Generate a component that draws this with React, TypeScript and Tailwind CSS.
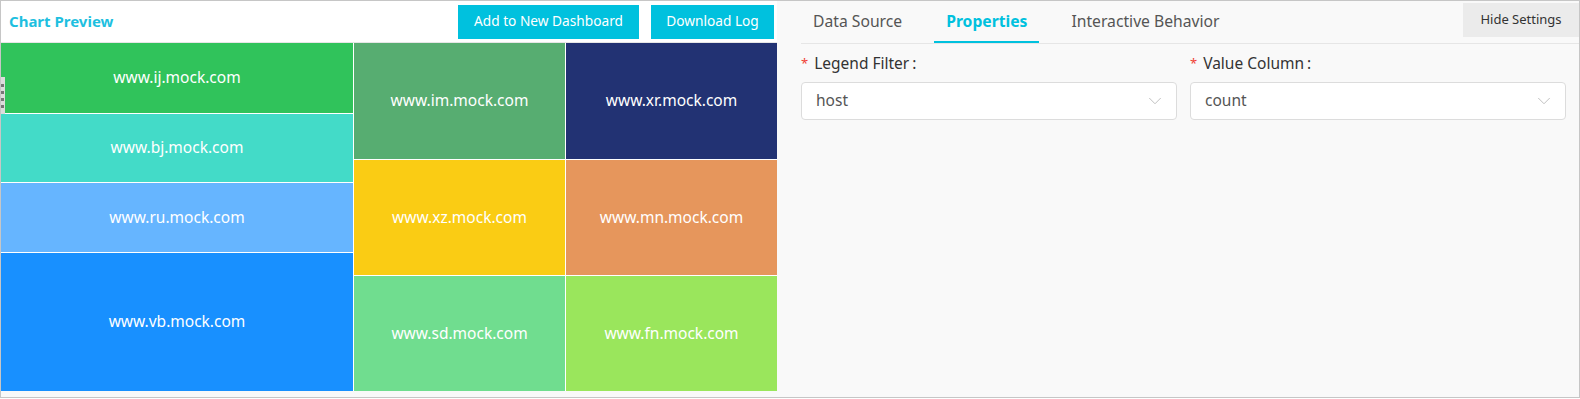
import { ChevronDown } from 'lucide-react'

type Cell = {
  host: string,
  color: string,
  height: string,
}

const font = { fontFamily: '"Noto Sans", "Open Sans", "Noto Sans CJK SC", sans-serif' }

const columns: Array<{ width: string, cells: Array<Cell> }> = [{
  width: 'w-[352px]',
  cells: [
    { host: 'www.ij.mock.com', color: 'bg-[#30c35b]', height: 'h-[70px]' },
    { host: 'www.bj.mock.com', color: 'bg-[#43dbc8]', height: 'h-[68px]' },
    { host: 'www.ru.mock.com', color: 'bg-[#66b5ff]', height: 'h-[69px]' },
    { host: 'www.vb.mock.com', color: 'bg-[#1890ff]', height: 'h-[138px]' },
  ],
}, {
  width: 'w-[211px]',
  cells: [
    { host: 'www.im.mock.com', color: 'bg-[#57ad71]', height: 'h-[116px]' },
    { host: 'www.xz.mock.com', color: 'bg-[#facc14]', height: 'h-[115px]' },
    { host: 'www.sd.mock.com', color: 'bg-[#70dd8f]', height: 'h-[115px]' },
  ],
}, {
  width: 'w-[211px]',
  cells: [
    { host: 'www.xr.mock.com', color: 'bg-[#223273]', height: 'h-[116px]' },
    { host: 'www.mn.mock.com', color: 'bg-[#e6965c]', height: 'h-[115px]' },
    { host: 'www.fn.mock.com', color: 'bg-[#9ae65c]', height: 'h-[115px]' },
  ],
}]

const tabs = ['Data Source', 'Properties', 'Interactive Behavior']

const fields = [
  { label: 'Legend Filter', value: 'host' },
  { label: 'Value Column', value: 'count' },
]

const ChartPreview = () => (
  <div className="relative flex w-[776px] flex-col">
    <div className="flex h-[42px] items-center justify-between border-b border-[#e6e6e6] bg-white pr-[3px] pl-2">
      <h1 className="text-[15px] font-bold text-[#1ebfe0]">Chart Preview</h1>
      <div className="flex gap-3">
        <button className="h-[34px] w-[181px] bg-[#00c1de] text-[13.7px] text-white">Add to New Dashboard</button>
        <button className="h-[34px] w-[123px] bg-[#00c1de] text-[13.7px] text-white">Download Log</button>
      </div>
    </div>
    <div className="flex h-[348px] gap-px bg-white">
      {columns.map(({ width, cells }) => (
        <div key={cells[0].host} className={`flex flex-col gap-px ${width}`}>
          {cells.map(({ host, color, height }) => (
            <div key={host} className={`flex items-center justify-center text-[15.5px] text-white ${color} ${height}`}>
              {host}
            </div>
          ))}
        </div>
      ))}
    </div>
    {/* drag handle */}
    <div className="absolute top-[76px] left-0 flex h-[37px] w-[4px] flex-col justify-center gap-[4px] bg-[#dcdcdc] py-1">
      <span className="h-[3px] w-[3px] bg-[#777]" />
      <span className="h-[3px] w-[3px] bg-[#777]" />
      <span className="h-[3px] w-[3px] bg-[#777]" />
      <span className="h-[3px] w-[3px] bg-[#777]" />
    </div>
  </div>
)

const Settings = () => (
  <div className="flex flex-1 flex-col pl-6">
    <div className="flex h-[43px] justify-between border-b border-[#e6e6e6]">
      <div className="flex items-stretch gap-5">
        {tabs.map((tab) => (
          <div
            key={tab}
            className={tab === 'Properties'
              ? 'flex items-center border-b-2 border-[#00c1de] px-3 pt-[2px] text-[15.7px] font-bold text-[#00c1de]'
              : 'flex items-center border-b-2 border-transparent px-3 pt-[2px] text-[15.7px] text-[#555]'}
          >
            {tab}
          </div>
        ))}
      </div>
      <button className="mt-[2px] h-[34px] w-[116px] bg-[#ebebeb] text-[13px] text-[#333]">Hide Settings</button>
    </div>
    <div className="flex gap-[13px] pt-[9px] pr-[13px]">
      {fields.map(({ label, value }) => (
        <div key={label} className="flex w-[376px] flex-col">
          <label className="flex h-[21px] items-center text-[15.5px] text-[#333]">
            <span className="mr-[6px] text-[13px] text-[#f04134]">*</span>
            {label}
            <span className="ml-[3px]">:</span>
          </label>
          <div className="mt-[8px] flex h-[38px] items-center justify-between rounded border border-[#dcdcdc] bg-white pr-[10px] pl-[14px]">
            <span className="text-[15.5px] text-[#555]">{value}</span>
            <ChevronDown className="text-[#bbb]" size={22} strokeWidth={1} />
          </div>
        </div>
      ))}
    </div>
  </div>
)

export default function App() {
  return (
    <div className="flex h-[398px] w-[1580px] border border-[#c6c6c6] bg-[#f9f9f9]" style={font}>
      <ChartPreview />
      <Settings />
    </div>
  )
}
